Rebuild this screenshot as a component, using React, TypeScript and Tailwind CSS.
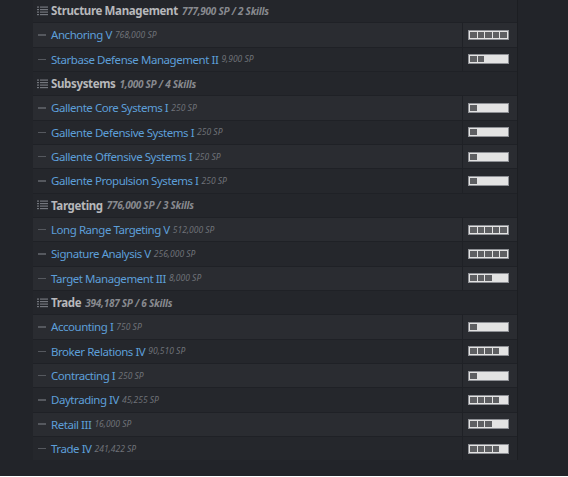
import React from "react";

type Skill = { name: string; sp: string; level: number };
type Group = { title: string; summary: string; skills: Skill[] };

const groups: Group[] = [
  {
    title: "Structure Management",
    summary: "777,900 SP / 2 Skills",
    skills: [
      { name: "Anchoring V", sp: "768,000 SP", level: 5 },
      { name: "Starbase Defense Management II", sp: "9,900 SP", level: 2 },
    ],
  },
  {
    title: "Subsystems",
    summary: "1,000 SP / 4 Skills",
    skills: [
      { name: "Gallente Core Systems I", sp: "250 SP", level: 1 },
      { name: "Gallente Defensive Systems I", sp: "250 SP", level: 1 },
      { name: "Gallente Offensive Systems I", sp: "250 SP", level: 1 },
      { name: "Gallente Propulsion Systems I", sp: "250 SP", level: 1 },
    ],
  },
  {
    title: "Targeting",
    summary: "776,000 SP / 3 Skills",
    skills: [
      { name: "Long Range Targeting V", sp: "512,000 SP", level: 5 },
      { name: "Signature Analysis V", sp: "256,000 SP", level: 5 },
      { name: "Target Management III", sp: "8,000 SP", level: 3 },
    ],
  },
  {
    title: "Trade",
    summary: "394,187 SP / 6 Skills",
    skills: [
      { name: "Accounting I", sp: "750 SP", level: 1 },
      { name: "Broker Relations IV", sp: "90,510 SP", level: 4 },
      { name: "Contracting I", sp: "250 SP", level: 1 },
      { name: "Daytrading IV", sp: "45,255 SP", level: 4 },
      { name: "Retail III", sp: "16,000 SP", level: 3 },
      { name: "Trade IV", sp: "241,422 SP", level: 4 },
    ],
  },
];

function ListIcon() {
  return (
    <svg width="11" height="10" viewBox="0 0 11 10" className="shrink-0">
      <g fill="#74777e">
        <rect x="0" y="0.5" width="2" height="1.2" />
        <rect x="3" y="0.5" width="8" height="1.2" />
        <rect x="0" y="3" width="2" height="1.2" />
        <rect x="3" y="3" width="8" height="1.2" />
        <rect x="0" y="5.5" width="2" height="1.2" />
        <rect x="3" y="5.5" width="8" height="1.2" />
        <rect x="0" y="8" width="2" height="1.2" />
        <rect x="3" y="8" width="8" height="1.2" />
      </g>
    </svg>
  );
}

function LevelBar({ level }: { level: number }) {
  return (
    <div className="flex h-[10px] w-[41px] gap-[1px] border border-[#8e9095] bg-[#e3e3e3] p-[1px]">
      {[0, 1, 2, 3, 4].map((i) => (
        <div key={i} className={i < level ? "flex-1 bg-[#5e5f62]" : "flex-1"} />
      ))}
    </div>
  );
}

export default function App() {
  return (
    <div
      className="min-h-[477px] w-full bg-[#222429] pb-[16px]"
      style={{ fontFamily: '"Noto Sans", "Open Sans", sans-serif' }}
    >
      <div className="ml-[33px] mt-[-2px] w-[485px] border-r border-[#1c1e22]">
        {groups.map((g) => (
          <div key={g.title}>
            <div className="flex h-[24.33px] items-center border-t border-[#1f2126] bg-[#24262b] pl-[4px]">
              <ListIcon />
              <span className="ml-[3px] text-[11.5px] font-bold tracking-[-0.35px] text-[#b7b8bb]">
                {g.title}
              </span>
              <span className="ml-[4px] pt-[1px] text-[10px] font-bold italic tracking-[-0.25px] text-[#888a8f]">
                {g.summary}
              </span>
            </div>
            {g.skills.map((s, i) => (
              <div
                key={s.name}
                className={
                  "flex h-[24.33px] items-center border-t border-[#1f2126] " +
                  (i % 2 === 0 ? "bg-[#2a2c31]" : "bg-[#25272c]")
                }
              >
                <div className="flex flex-1 items-center pl-[5px]">
                  <span className="h-[1.5px] w-[8px] bg-[#55585e]" />
                  <span className="ml-[5px] text-[11.5px] tracking-[-0.45px] text-[#5d9fd9]">{s.name}</span>
                  <span className="ml-[3px] pt-[1px] text-[8.5px] italic text-[#6f7278]">{s.sp}</span>
                </div>
                <div className="flex h-full w-[55px] items-center border-l border-[#1f2126] pl-[5px]">
                  <LevelBar level={s.level} />
                </div>
              </div>
            ))}
          </div>
        ))}
      </div>
    </div>
  );
}
